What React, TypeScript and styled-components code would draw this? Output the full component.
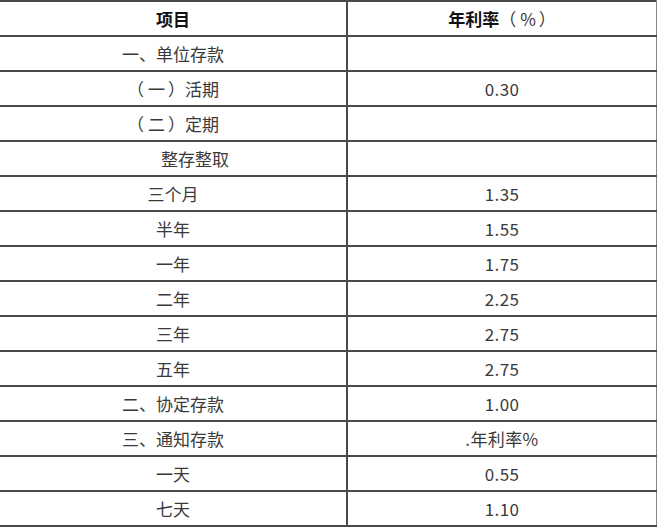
import React from "react";
import styled, { createGlobalStyle } from "styled-components";

const Global = createGlobalStyle`
  html, body { margin: 0; padding: 0; background: #fff; }
  body { font-family: "Noto Sans CJK SC", "Noto Sans", sans-serif; overflow: hidden; }
`;

const Table = styled.table`
  border-collapse: collapse;
  width: 660px;
  margin-left: -2px;
  table-layout: fixed;
  color: #333;
  font-size: 17px;
`;

const Row = styled.tr`
  height: 35px;
`;

const Cell = styled.td<{ $indent?: number; $head?: boolean }>`
  border: 2px solid #4a4a4a;
  padding: 0 0 0 ${(p) => p.$indent ?? 0}px;
  text-align: center;
  vertical-align: middle;
  line-height: 33px;
  font-weight: ${(p) => (p.$head ? 700 : 400)};
  color: ${(p) => (p.$head ? "#111" : "#3a3a3a")};
  white-space: nowrap;
  &:last-child { border-right-color: #888; }
`;

const Num = styled.span`
  letter-spacing: 0.4px;
`;

const Punct = styled.span<{ $open?: boolean }>`
  font-weight: 400;
  color: #3a3a3a;
  margin: ${(p) => (p.$open ? "0 4px 0 0" : "0 0 0 3px")};
`;

const Light = styled.span`
  font-weight: 400;
  color: #3a3a3a;
`;

function withParens(text: string) {
  const parts = text.split(/([（）])/);
  return parts.map((p, i) =>
    p === "（" || p === "）" ? (
      <Punct key={i} $open={p === "（"}>
        {p}
      </Punct>
    ) : (
      <React.Fragment key={i}>{p}</React.Fragment>
    )
  );
}

const rows: [string, string, number?][] = [
  ["一、单位存款", ""],
  ["（一）活期", "0.30"],
  ["（二）定期", ""],
  ["整存整取", "", 44],
  ["三个月", "1.35"],
  ["半年", "1.55"],
  ["一年", "1.75"],
  ["二年", "2.25"],
  ["三年", "2.75"],
  ["五年", "2.75"],
  ["二、协定存款", "1.00"],
  ["三、通知存款", ".年利率%"],
  ["一天", "0.55"],
  ["七天", "1.10"],
];

export default function App() {
  return (
    <>
      <Global />
      <Table>
        <colgroup>
          <col style={{ width: 348 }} />
          <col />
        </colgroup>
        <tbody>
          <Row>
            <Cell $head>项目</Cell>
            <Cell $head>
              年利率<Punct $open>（</Punct>
              <Light>%</Light>
              <Punct>）</Punct>
            </Cell>
          </Row>
          {rows.map(([a, b, ind], i) => (
            <Row key={i}>
              <Cell $indent={ind}>{withParens(a)}</Cell>
              <Cell>
                <Num>{b}</Num>
              </Cell>
            </Row>
          ))}
        </tbody>
      </Table>
    </>
  );
}
